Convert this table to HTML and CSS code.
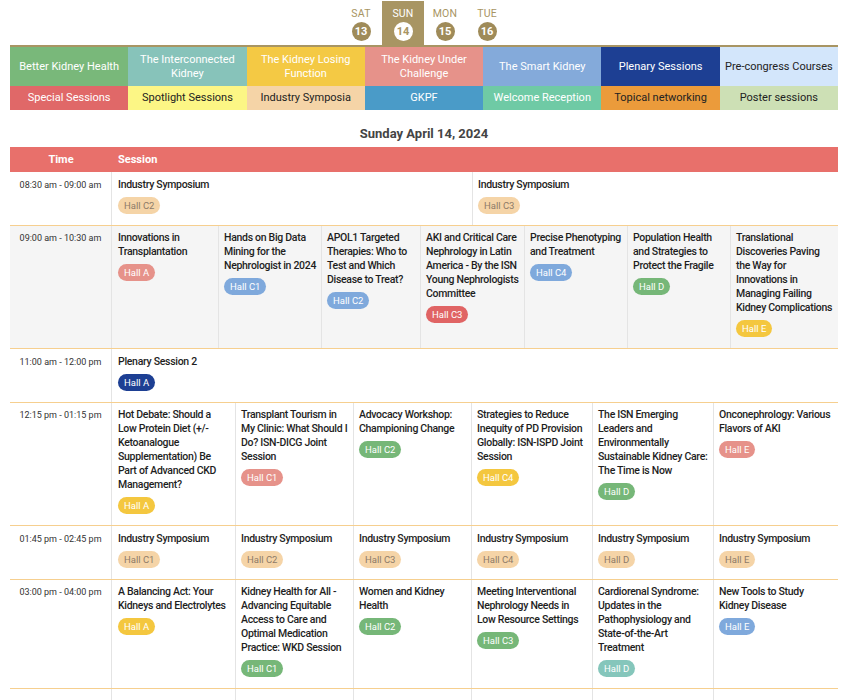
FILE: index.html
```html
<!DOCTYPE html>
<html lang="en">
<head>
<meta charset="utf-8">
<title>Programme - Sunday April 14, 2024</title>
<link rel="stylesheet" href="styles.css">
</head>
<body>
<div class="page">
  <nav class="days">
    <div class="day"><span class="dname">SAT</span><span class="dnum">13</span></div>
    <div class="day active"><span class="dname">SUN</span><span class="dnum">14</span></div>
    <div class="day"><span class="dname">MON</span><span class="dnum">15</span></div>
    <div class="day"><span class="dname">TUE</span><span class="dnum">16</span></div>
  </nav>

  <div class="legend">
    <div class="lg tall c-green">Better Kidney Health</div>
    <div class="lg tall c-teal">The Interconnected Kidney</div>
    <div class="lg tall c-yellow">The Kidney Losing Function</div>
    <div class="lg tall c-salmon">The Kidney Under Challenge</div>
    <div class="lg tall c-blue">The Smart Kidney</div>
    <div class="lg tall c-navy">Plenary Sessions</div>
    <div class="lg tall c-sky dark">Pre-congress Courses</div>
    <div class="lg c-red">Special Sessions</div>
    <div class="lg c-lemon dark">Spotlight Sessions</div>
    <div class="lg c-peach dark">Industry Symposia</div>
    <div class="lg c-gkpf">GKPF</div>
    <div class="lg c-mint">Welcome Reception</div>
    <div class="lg c-orange dark">Topical networking</div>
    <div class="lg c-sage dark">Poster sessions</div>
  </div>

  <h2 class="date">Sunday April 14, 2024</h2>

  <div class="schedule">
    <div class="thead">
      <div class="th th-time">Time</div>
      <div class="th">Session</div>
    </div>

    <div class="row">
      <div class="time">08:30 am - 09:00 am</div>
      <div class="cells cols-2">
        <div class="cell"><div class="title">Industry Symposium</div><span class="pill p-peach">Hall C2</span></div>
        <div class="cell"><div class="title">Industry Symposium</div><span class="pill p-peach">Hall C3</span></div>
      </div>
    </div>

    <div class="row shaded">
      <div class="time">09:00 am - 10:30 am</div>
      <div class="cells cols-7">
        <div class="cell"><div class="title">Innovations in Transplantation</div><span class="pill p-salmon">Hall A</span></div>
        <div class="cell"><div class="title">Hands on Big Data Mining for the Nephrologist in 2024</div><span class="pill p-blue">Hall C1</span></div>
        <div class="cell"><div class="title">APOL1 Targeted Therapies: Who to Test and Which Disease to Treat?</div><span class="pill p-blue">Hall C2</span></div>
        <div class="cell"><div class="title">AKI and Critical Care Nephrology in Latin America - By the ISN Young Nephrologists Committee</div><span class="pill p-red">Hall C3</span></div>
        <div class="cell"><div class="title">Precise Phenotyping and Treatment</div><span class="pill p-blue">Hall C4</span></div>
        <div class="cell"><div class="title">Population Health and Strategies to Protect the Fragile</div><span class="pill p-green">Hall D</span></div>
        <div class="cell"><div class="title">Translational Discoveries Paving the Way for Innovations in Managing Failing Kidney Complications</div><span class="pill p-yellow">Hall E</span></div>
      </div>
    </div>

    <div class="row">
      <div class="time">11:00 am - 12:00 pm</div>
      <div class="cells cols-1">
        <div class="cell"><div class="title">Plenary Session 2</div><span class="pill p-navy">Hall A</span></div>
      </div>
    </div>

    <div class="row">
      <div class="time">12:15 pm - 01:15 pm</div>
      <div class="cells cols-6">
        <div class="cell"><div class="title">Hot Debate: Should a Low Protein Diet (+/- Ketoanalogue Supplementation) Be Part of Advanced CKD Management?</div><span class="pill p-yellow">Hall A</span></div>
        <div class="cell"><div class="title">Transplant Tourism in My Clinic: What Should I Do? ISN-DICG Joint Session</div><span class="pill p-salmon">Hall C1</span></div>
        <div class="cell"><div class="title">Advocacy Workshop: Championing Change</div><span class="pill p-green">Hall C2</span></div>
        <div class="cell"><div class="title">Strategies to Reduce Inequity of PD Provision Globally: ISN-ISPD Joint Session</div><span class="pill p-yellow">Hall C4</span></div>
        <div class="cell"><div class="title">The ISN Emerging Leaders and Environmentally Sustainable Kidney Care: The Time is Now</div><span class="pill p-green">Hall D</span></div>
        <div class="cell"><div class="title">Onconephrology: Various Flavors of AKI</div><span class="pill p-salmon">Hall E</span></div>
      </div>
    </div>

    <div class="row">
      <div class="time">01:45 pm - 02:45 pm</div>
      <div class="cells cols-6">
        <div class="cell"><div class="title">Industry Symposium</div><span class="pill p-peach">Hall C1</span></div>
        <div class="cell"><div class="title">Industry Symposium</div><span class="pill p-peach">Hall C2</span></div>
        <div class="cell"><div class="title">Industry Symposium</div><span class="pill p-peach">Hall C3</span></div>
        <div class="cell"><div class="title">Industry Symposium</div><span class="pill p-peach">Hall C4</span></div>
        <div class="cell"><div class="title">Industry Symposium</div><span class="pill p-peach">Hall D</span></div>
        <div class="cell"><div class="title">Industry Symposium</div><span class="pill p-peach">Hall E</span></div>
      </div>
    </div>

    <div class="row">
      <div class="time">03:00 pm - 04:00 pm</div>
      <div class="cells cols-6">
        <div class="cell"><div class="title">A Balancing Act: Your Kidneys and Electrolytes</div><span class="pill p-yellow">Hall A</span></div>
        <div class="cell"><div class="title">Kidney Health for All - Advancing Equitable Access to Care and Optimal Medication Practice: WKD Session</div><span class="pill p-green">Hall C1</span></div>
        <div class="cell"><div class="title">Women and Kidney Health</div><span class="pill p-green">Hall C2</span></div>
        <div class="cell"><div class="title">Meeting Interventional Nephrology Needs in Low Resource Settings</div><span class="pill p-green">Hall C3</span></div>
        <div class="cell"><div class="title">Cardiorenal Syndrome: Updates in the Pathophysiology and State-of-the-Art Treatment</div><span class="pill p-teal">Hall D</span></div>
        <div class="cell"><div class="title">New Tools to Study Kidney Disease</div><span class="pill p-blue">Hall E</span></div>
      </div>
    </div>

    <div class="row row-next">
      <div class="time"></div>
      <div class="cells cols-6">
        <div class="cell"></div><div class="cell"></div><div class="cell"></div>
        <div class="cell"></div><div class="cell"></div><div class="cell"></div>
      </div>
    </div>
  </div>
</div>
</body>
</html>
```

FILE: styles.css
```css
* { box-sizing: border-box; }

html, body {
  margin: 0;
  padding: 0;
  background: #ffffff;
  overflow: hidden;
}

body {
  font-family: Roboto, "Noto Sans", "Liberation Sans", sans-serif;
  color: #222;
}

.page {
  width: 828px;
  margin-left: 10px;
}

/* ---------- day tabs ---------- */
.days {
  display: flex;
  justify-content: center;
  height: 47px;
  padding-top: 1px;
  border-bottom: 2px solid #a89563;
}

.day {
  width: 42px;
  display: flex;
  flex-direction: column;
  align-items: center;
}

.day.active { background: #a89563; }

.dname {
  margin-top: 7px;
  font-size: 10.5px;
  line-height: 12px;
  color: #a89563;
  letter-spacing: 0.2px;
}

.day.active .dname { color: #fff; }

.dnum {
  margin-top: 2px;
  width: 19px;
  height: 19px;
  border-radius: 50%;
  background: #9f8b59;
  color: #fff;
  font-size: 11px;
  font-weight: 700;
  line-height: 19px;
  text-align: center;
}

.day.active .dnum {
  background: #fff;
  color: #a89563;
}

/* ---------- legend ---------- */
.legend {
  display: grid;
  grid-template-columns: repeat(7, 1fr);
}

.lg {
  display: flex;
  align-items: center;
  justify-content: center;
  text-align: center;
  height: 24px;
  padding: 0 4px;
  font-size: 11px;
  line-height: 14px;
  color: #fff;
}

.lg.tall { height: 39px; }
.lg.dark { color: #222; }

.c-green  { background: #79b87a; }
.c-teal   { background: #87c3ba; }
.c-yellow { background: #f4c944; }
.c-salmon { background: #e6928a; }
.c-blue   { background: #84aada; }
.c-navy   { background: #1d3f93; }
.c-sky    { background: #d3e6fb; }
.c-red    { background: #e06868; }
.c-lemon  { background: #fcf685; }
.c-peach  { background: #f5d4a7; }
.c-gkpf   { background: #4a9bc8; }
.c-mint   { background: #6fcaa5; }
.c-orange { background: #eb9b3b; }
.c-sage   { background: #cde0b5; }

/* ---------- date heading ---------- */
.date {
  margin: 0;
  padding: 16px 0 5px;
  text-align: center;
  font-size: 13px;
  line-height: 16px;
  font-weight: 700;
  color: #444;
}

/* ---------- schedule ---------- */
.thead {
  display: grid;
  grid-template-columns: 102px 1fr;
  height: 25px;
  background: #e8706b;
  color: #fff;
  font-size: 11px;
  font-weight: 700;
}

.th {
  display: flex;
  align-items: center;
  padding-left: 6px;
}

.th-time {
  justify-content: center;
  padding-left: 0;
}

.row {
  display: grid;
  grid-template-columns: 102px 1fr;
  border-bottom: 1px solid #f6cf8f;
}

.row.shaded { background: #f5f5f5; }

.time {
  padding-top: 5.5px;
  border-right: 1px solid #e4e4e4;
  text-align: center;
  font-size: 9px;
  line-height: 14px;
  color: #333;
}

.cells { display: grid; }

.cols-1 { grid-template-columns: 1fr; }
.cols-2 { grid-template-columns: 360px 1fr; }
.cols-7 { grid-template-columns: 106px 103px 99px 104px 103px 103px 1fr; }
.cols-6 { grid-template-columns: 123px 118px 118px 121px 121px 1fr; }

.cell {
  padding: 5.5px 4px 11px 5px;
  border-left: 1px solid #e4e4e4;
}

.cell:first-child {
  border-left: 0;
  padding-left: 6px;
}

.title {
  font-size: 10.5px;
  line-height: 14px;
  font-weight: 500;
  letter-spacing: -0.3px;
  color: #1e1e1e;
}

.pill {
  display: block;
  width: fit-content;
  margin-top: 5px;
  height: 17px;
  padding: 0 6px;
  border-radius: 9px;
  font-size: 9.5px;
  line-height: 17px;
  color: #fff;
}

.p-peach  { background: #f5d4a7; color: #8d7b68; }
.p-salmon { background: #e6928a; }
.p-blue   { background: #7fa9dc; }
.p-red    { background: #e06464; }
.p-green  { background: #76b778; }
.p-yellow { background: #f4c73f; }
.p-navy   { background: #1d3f93; }
.p-teal   { background: #85c6bb; }

.row-next { height: 30px; border-bottom: 0; }
```
